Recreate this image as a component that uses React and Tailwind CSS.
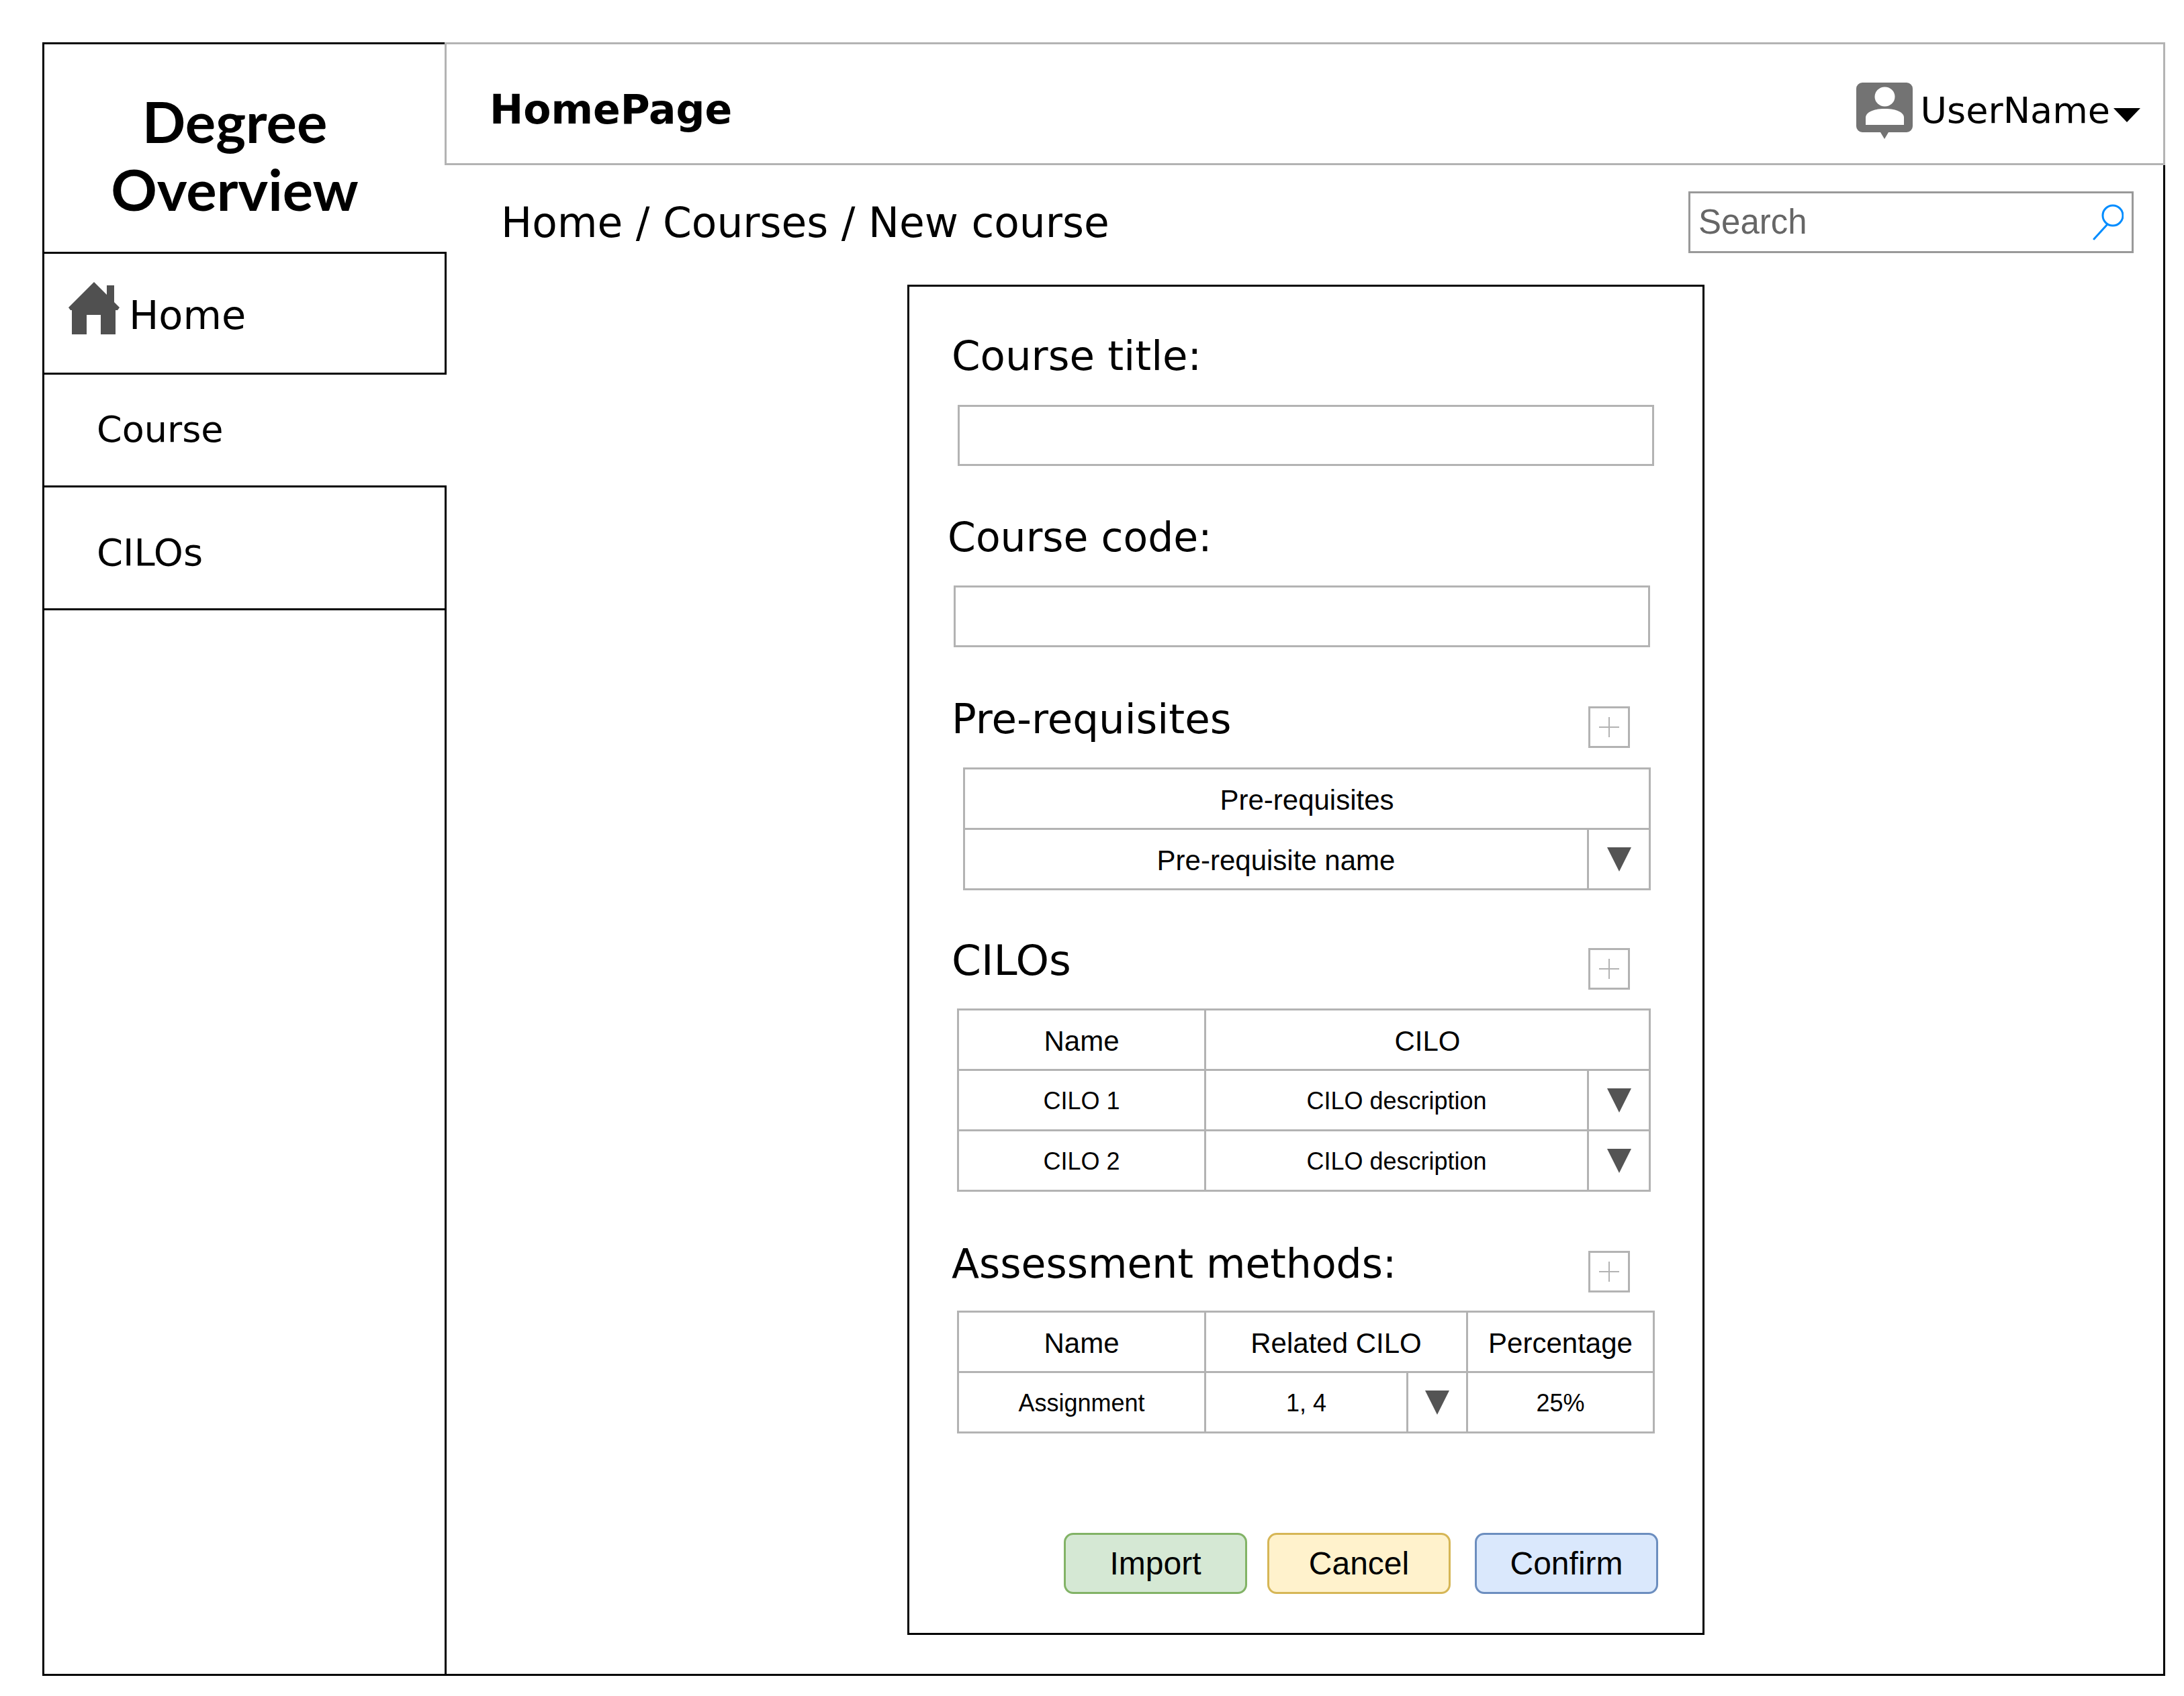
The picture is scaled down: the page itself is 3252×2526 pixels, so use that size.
const dejavu = "font-['DejaVu_Sans',sans-serif]"
const arial = "font-['Liberation_Sans',Arial,sans-serif]"

function Caret({ className }) {
  return (
    <svg viewBox="0 0 36 36" className={className}>
      <path d="M0 0H36L18 36Z" fill="#545454" />
    </svg>
  )
}

function AddBox() {
  return (
    <div className="mt-[18px] flex h-[62px] w-[62px] items-center justify-center border-[3px] border-[#b3b3b3]">
      <svg viewBox="0 0 32 32" className="h-[32px] w-[32px]">
        <path d="M16 1V31M1 16H31" stroke="#b3b3b3" strokeWidth="2" fill="none" />
      </svg>
    </div>
  )
}

function Heading({ children, className = 'text-[61px]' }) {
  return <h2 className={`h-[70px] font-normal leading-[70px] text-black ${dejavu} ${className}`}>{children}</h2>
}

function Cell({ children, small, colSpan }) {
  return (
    <td
      colSpan={colSpan}
      className={`h-[90px] border-[3px] border-[#b3b3b3] p-0 pt-[3px] text-center text-black ${arial} ${small ? 'text-[36px]' : 'text-[42px]'}`}
    >
      {children}
    </td>
  )
}

function CaretCell() {
  return (
    <td className="h-[90px] border-[3px] border-[#b3b3b3] p-0">
      <div className="flex justify-center">
        <Caret className="h-[36px] w-[36px]" />
      </div>
    </td>
  )
}

function NavRow({ children, className = '' }) {
  return (
    <div className={`flex items-center text-black ${dejavu} ${className}`}>{children}</div>
  )
}

function Action({ children, className }) {
  return (
    <button className={`h-[91px] w-[273px] rounded-[14px] border-[3px] text-[48px] text-black ${arial} ${className}`}>
      {children}
    </button>
  )
}

export default function App() {
  return (
    <div className="h-[2526px] w-[3252px] bg-white pl-[63px] pt-[63px]">
      <div className="flex h-[2433px] w-[3161px]">
        <aside className="flex w-[602px] shrink-0 flex-col border-y-[3px] border-l-[3px] border-black">
          <div className="flex h-[309px] flex-col items-center pr-[32px] pt-[64px]">
            <p className="text-center text-[85px] font-bold leading-[101px] text-black font-['Comic_Sans_MS','Lato',sans-serif]">
              Degree
              <br />
              Overview
            </p>
          </div>
          <NavRow className="h-[183px] border-y-[3px] border-r-[3px] border-black pl-[36px]">
            <svg viewBox="0 0 76 78" className="mb-[16px] h-[78px] w-[76px] shrink-0">
              <path
                d="M38 0L57 19V5H68V30L76 38 73 42H70V78H48V49H27V78H5V42H3L0 38Z"
                fill="#505050"
              />
            </svg>
            <span className="ml-[14px] mt-[8px] text-[59px]">Home</span>
          </NavRow>
          <NavRow className="h-[165px] pb-[2px] pl-[78px] text-[54px]">Course</NavRow>
          <NavRow className="h-[186px] border-y-[3px] border-r-[3px] border-black pl-[78px] pt-[14px] text-[56px]">CILOs</NavRow>
          <div className="flex-1 border-r-[3px] border-black" />
        </aside>

        <main className="flex min-w-0 flex-1 flex-col border-b-[3px] border-r-[3px] border-black">
          <header className="-ml-[3px] -mr-[3px] flex h-[183px] shrink-0 items-center justify-between border-[3px] border-[#b3b3b3] bg-white pl-[64px] pr-[34px] pt-[16px]">
            <h1 className={`text-[60px] font-bold text-black ${dejavu}`}>HomePage</h1>
            <div className="mt-[4px] flex items-center">
              <svg viewBox="0 0 84 84" className="h-[84px] w-[84px]">
                <path
                  d="M9 0H75A9 9 0 0 1 84 9V65A9 9 0 0 1 75 74H48L42 84 36 74H9A9 9 0 0 1 0 65V9A9 9 0 0 1 9 0Z"
                  fill="#737373"
                />
                <ellipse cx="42.5" cy="21" rx="15" ry="14.5" fill="#fff" />
                <path d="M14 63V52C14 45 24 39 42.5 39S71 45 71 52V63Z" fill="#fff" />
              </svg>
              <span className={`ml-[12px] text-[54px] text-black ${dejavu}`}>UserName</span>
              <svg viewBox="0 0 40 21" className="ml-[5px] mt-[14px] h-[21px] w-[40px]">
                <path d="M0 0H40L20 21Z" fill="#000" />
              </svg>
            </div>
          </header>

          <div className="flex h-[178px] shrink-0 items-start justify-between pl-[81px] pr-[44px] pt-[39px]">
            <p className={`mt-[11px] text-[61.4px] leading-[72px] text-black ${dejavu}`}>Home / Courses / New course</p>
            <div className="flex h-[92px] w-[663px] items-center justify-between border-[3px] border-[#999999] pl-[12px] pr-[12px]">
              <span className={`text-[51px] text-[#666666] ${arial}`}>Search</span>
              <svg viewBox="0 0 46 54" className="h-[54px] w-[46px]">
                <circle cx="30" cy="17" r="15" stroke="#008cff" strokeWidth="3" fill="none" />
                <path d="M22 30L2 52" stroke="#008cff" strokeWidth="3" strokeLinecap="round" />
              </svg>
            </div>
          </div>

          <section className="ml-[686px] flex h-[2011px] w-[1187px] shrink-0 flex-col border-[3px] border-black">
            <Heading className="ml-[63px] mt-[68px] text-[61px]">Course title:</Heading>
            <div className="ml-[72px] mt-[38px] h-[91px] w-[1037px] shrink-0 border-[3px] border-[#b3b3b3]" />

            <Heading className="ml-[57px] mt-[71px] text-[60px]">Course code:</Heading>
            <div className="ml-[66px] mt-[37px] h-[92px] w-[1037px] shrink-0 border-[3px] border-[#b3b3b3]" />

            <div className="ml-[63px] mt-[70px] flex h-[81px] w-[1010px] items-start justify-between">
              <Heading className="mt-[2px] text-[61px]">Pre-requisites</Heading>
              <AddBox />
            </div>
            <table className="ml-[80px] mt-[28px] w-[1021px] table-fixed border-collapse">
              <colgroup>
                <col className="w-[929px]" />
                <col className="w-[92px]" />
              </colgroup>
              <tbody>
                <tr>
                  <Cell colSpan={2}>Pre-requisites</Cell>
                </tr>
                <tr>
                  <Cell>Pre-requisite name</Cell>
                  <CaretCell />
                </tr>
              </tbody>
            </table>

            <div className="ml-[63px] mt-[68px] flex h-[80px] w-[1010px] items-start justify-between">
              <Heading className="mt-[2px] text-[63px]">CILOs</Heading>
              <AddBox />
            </div>
            <table className="ml-[71px] mt-[28px] w-[1030px] table-fixed border-collapse">
              <colgroup>
                <col className="w-[368px]" />
                <col className="w-[570px]" />
                <col className="w-[92px]" />
              </colgroup>
              <tbody>
                <tr>
                  <Cell>Name</Cell>
                  <Cell colSpan={2}>CILO</Cell>
                </tr>
                <tr>
                  <Cell small>CILO 1</Cell>
                  <Cell small>CILO description</Cell>
                  <CaretCell />
                </tr>
                <tr>
                  <Cell small>CILO 2</Cell>
                  <Cell small>CILO description</Cell>
                  <CaretCell />
                </tr>
              </tbody>
            </table>

            <div className="ml-[63px] mt-[70px] flex h-[80px] w-[1010px] items-start justify-between">
              <Heading className="mt-[2px] text-[60px]">Assessment methods:</Heading>
              <AddBox />
            </div>
            <table className="ml-[71px] mt-[27px] w-[1036px] table-fixed border-collapse">
              <colgroup>
                <col className="w-[368px]" />
                <col className="w-[301px]" />
                <col className="w-[89px]" />
                <col className="w-[278px]" />
              </colgroup>
              <tbody>
                <tr>
                  <Cell>Name</Cell>
                  <Cell colSpan={2}>Related CILO</Cell>
                  <Cell>Percentage</Cell>
                </tr>
                <tr>
                  <Cell small>Assignment</Cell>
                  <Cell small>1, 4</Cell>
                  <CaretCell />
                  <Cell small>25%</Cell>
                </tr>
              </tbody>
            </table>

            <div className="ml-[230px] mt-[148px] flex">
              <Action className="border-[#82b366] bg-[#d5e8d4]">Import</Action>
              <Action className="ml-[30px] border-[#d6b656] bg-[#fff2cc]">Cancel</Action>
              <Action className="ml-[36px] border-[#6c8ebf] bg-[#dae8fc]">Confirm</Action>
            </div>
          </section>
        </main>
      </div>
    </div>
  )
}
